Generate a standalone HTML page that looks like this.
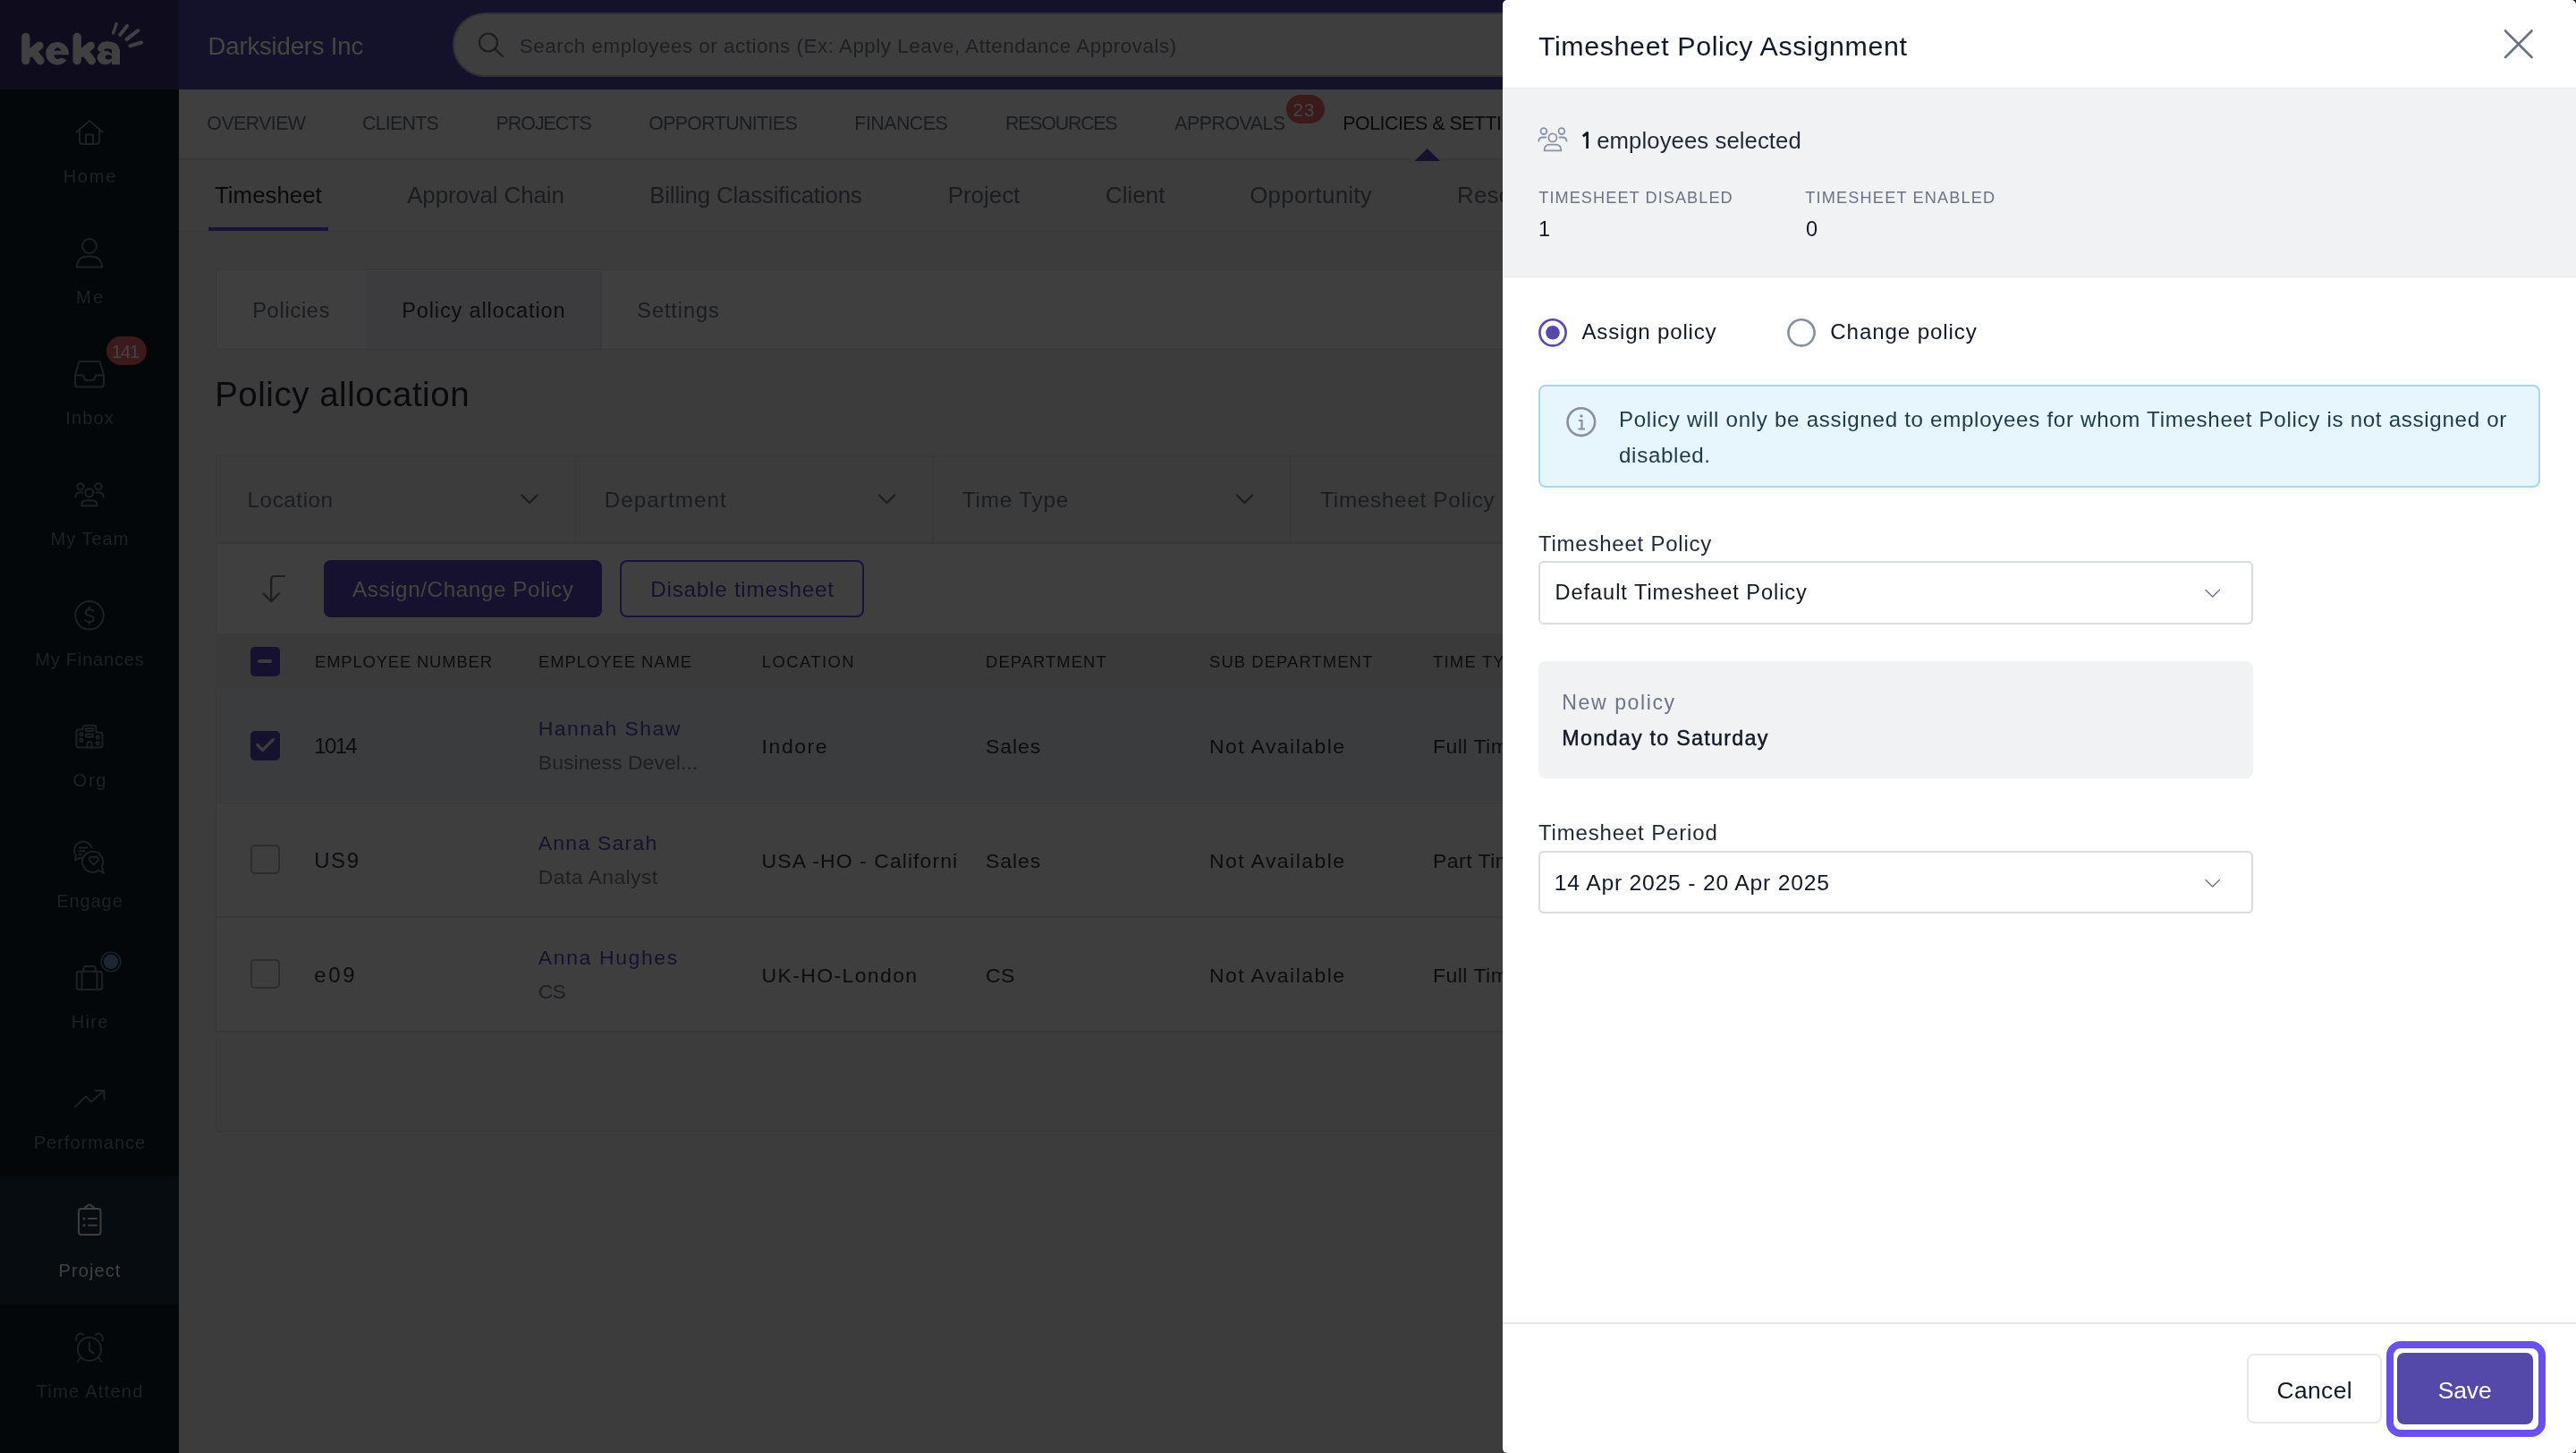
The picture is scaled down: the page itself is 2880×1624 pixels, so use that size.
<!DOCTYPE html>
<html><head><meta charset="utf-8">
<style>
html,body{margin:0;padding:0;width:2880px;height:1624px;overflow:hidden;background:#3c3c3c;font-family:"Liberation Sans",sans-serif;}
.a{position:absolute;box-sizing:border-box;}
.t{position:absolute;white-space:pre;line-height:1;font-family:"Liberation Sans",sans-serif;}
svg{position:absolute;left:0;top:0;overflow:visible;}
@media (max-width:2000px){html{zoom:0.5;}}
</style></head><body>
<!-- ============ PAGE (dimmed) ============ -->
<div class="a" style="left:0;top:0;width:200px;height:1624px;background:#03070a"></div>
<div class="a" style="left:0;top:0;width:200px;height:100px;background:#0e0c1d"></div>
<div class="a" style="left:0;top:1315px;width:200px;height:142px;background:#070c10"></div>
<div class="a" style="left:200px;top:0;width:2680px;height:100px;background:#14112a"></div>
<div class="a" style="left:200px;top:100px;width:1480px;height:78px;background:#3f3f3f"></div>
<div class="a" style="left:200px;top:180px;width:1480px;height:78px;background:#3d3d3d"></div>
<!-- search -->
<div class="a" style="left:506px;top:14px;width:1400px;height:71.5px;border-radius:36px;background:#3e3e3e;border:2px solid #303032"></div>
<!-- badge 23 -->
<div class="a" style="left:1436px;top:104px;width:47px;height:36px;border-radius:18px;background:#404040"></div>
<div class="a" style="left:1438px;top:106px;width:43px;height:32px;border-radius:16px;background:#3a1a1a"></div>
<!-- nav bottom shadow -->
<div class="a" style="left:200px;top:177px;width:1480px;height:5px;background:linear-gradient(#3a3a3a,#3b3b3b 50%,#3d3d3d)"></div>
<!-- subtab underline / border -->
<div class="a" style="left:200px;top:257.5px;width:1480px;height:1.5px;background:#383838"></div>
<div class="a" style="left:233px;top:254px;width:134px;height:4px;background:#17133a;border-radius:1px"></div>
<!-- tab card -->
<div class="a" style="left:241px;top:301px;width:1600px;height:90px;border:1.5px solid #383838;border-radius:5px;background:#3f3f3f"></div>
<div class="a" style="left:242.5px;top:302.5px;width:166.5px;height:87px;background:#3f3f3f;border-radius:4px 0 0 4px"></div>
<div class="a" style="left:409px;top:302.5px;width:262px;height:87px;background:#3c3c3e"></div>
<div class="a" style="left:671px;top:302.5px;width:1.5px;height:87px;background:#393939"></div>
<!-- filter + table card -->
<div class="a" style="left:241px;top:508.5px;width:1600px;height:756px;border:1.5px solid #383838;border-radius:5px;background:#3c3c3c"></div>
<div class="a" style="left:242.5px;top:606px;width:1500px;height:1.5px;background:#383838"></div>
<div class="a" style="left:642.5px;top:510px;width:1.5px;height:96px;background:#383838"></div>
<div class="a" style="left:1042px;top:510px;width:1.5px;height:96px;background:#383838"></div>
<div class="a" style="left:1441.5px;top:510px;width:1.5px;height:96px;background:#383838"></div>
<!-- action bar -->
<div class="a" style="left:242.5px;top:607.5px;width:1500px;height:100.5px;background:#3f3f3f"></div>
<div class="a" style="left:362px;top:626px;width:311px;height:63.5px;border-radius:8px;background:#16112e"></div>
<div class="a" style="left:693px;top:626px;width:273px;height:63.5px;border-radius:8px;border:2.5px solid #17133a"></div>
<!-- table header -->
<div class="a" style="left:242.5px;top:708px;width:1500px;height:61px;background:#3a3a3a"></div>
<div class="a" style="left:279.5px;top:722.5px;width:33px;height:33px;border-radius:5px;background:#16112e"></div>
<div class="a" style="left:288px;top:737px;width:16px;height:4px;border-radius:2px;background:#3c3c3c"></div>
<!-- rows -->
<div class="a" style="left:242.5px;top:769px;width:1500px;height:128.5px;background:#3b3c3e"></div>
<div class="a" style="left:242.5px;top:897.5px;width:1500px;height:127px;background:#3e3e3e"></div>
<div class="a" style="left:242.5px;top:1024px;width:1500px;height:1.5px;background:#383838"></div>
<div class="a" style="left:242.5px;top:896.5px;width:1500px;height:1.5px;background:#393939"></div>
<div class="a" style="left:242.5px;top:1025.5px;width:1500px;height:127px;background:#3e3e3e"></div>
<div class="a" style="left:242.5px;top:1152px;width:1500px;height:1.5px;background:#383838"></div>
<div class="a" style="left:279.5px;top:816.5px;width:33px;height:33px;border-radius:5px;background:#16112e"></div>
<div class="a" style="left:279.5px;top:944px;width:33px;height:33px;border-radius:5px;border:2.5px solid #2b2d30"></div>
<div class="a" style="left:279.5px;top:1072px;width:33px;height:33px;border-radius:5px;border:2.5px solid #2b2d30"></div>
<!-- inbox badge -->
<div class="a" style="left:118.5px;top:376px;width:45.5px;height:32px;border-radius:16px;background:#3a1a1a"></div>
<svg width="2880" height="1624" viewBox="0 0 2880 1624" fill="none">
  <!-- logo -->
  <g stroke="#404040" stroke-linecap="round" fill="none">
    <line x1="28.8" y1="41.5" x2="28.8" y2="67.6" stroke-width="9.4"/>
    <line x1="34" y1="59.5" x2="44" y2="51" stroke-width="9.2"/>
    <line x1="39.5" y1="60.5" x2="45" y2="67.8" stroke-width="9.2"/>
    <line x1="86.2" y1="41.5" x2="86.2" y2="67.6" stroke-width="9.4"/>
    <line x1="91.4" y1="59.5" x2="101.4" y2="51" stroke-width="9.2"/>
    <line x1="96.9" y1="60.5" x2="102.4" y2="67.8" stroke-width="9.2"/>
    <line x1="126.6" y1="37" x2="130.2" y2="26.5" stroke-width="3.4"/>
    <line x1="134.2" y1="39" x2="142.2" y2="28.8" stroke-width="4"/>
    <line x1="141.5" y1="44" x2="154.2" y2="34.2" stroke-width="4.2"/>
    <line x1="145.5" y1="51.2" x2="158.2" y2="47.6" stroke-width="4.2"/>
  </g>
  <path fill-rule="evenodd" fill="#404040" d="M51.199999999999996 59.75 A12.85 12.85 0 1 0 76.89999999999999 59.75 A12.85 12.85 0 1 0 51.199999999999996 59.75 Z M60.150000000000006 59.6 A4.3 6.4 0 1 0 68.75 59.6 A4.3 6.4 0 1 0 60.150000000000006 59.6 Z"/>
  <rect x="58" y="56.7" width="12" height="4.6" fill="#404040"/>
  <path d="M66.5 61.3 L80 61.3 L80 66.8 L73.5 66.8 Q70 64.5 66.5 64.5 Z" fill="#0e0c1d"/>
  <path d="M113.2 54 C115 49.5 118 50.4 121.5 50.4 C126 50.4 129.5 52 129.5 57" stroke="#404040" stroke-width="8" fill="none" stroke-linecap="round"/>
  <rect x="125" y="55" width="9" height="17.2" fill="#404040"/>
  <path fill-rule="evenodd" fill="#404040" d="M108.69999999999999 64.45 A8.9 7.75 0 1 0 126.5 64.45 A8.9 7.75 0 1 0 108.69999999999999 64.45 Z M117.6 63.85 A3.7 2.6 0 1 0 125.0 63.85 A3.7 2.6 0 1 0 117.6 63.85 Z"/>
  <!-- search icon -->
  <circle cx="546" cy="47.5" r="10" stroke="#1c1d21" stroke-width="2.2"/>
  <line x1="553.5" y1="55" x2="562" y2="63" stroke="#1c1d21" stroke-width="2.2" stroke-linecap="round"/>
  <!-- nav triangle -->
  <path d="M1581.5 180 L1595.8 166 L1610 180 Z" fill="#16112e"/>
  <!-- filter chevrons -->
  <g stroke="#1c1d21" stroke-width="2.2" fill="none" stroke-linecap="round" stroke-linejoin="round">
    <path d="M583.5 553.5 L592 562 L600.5 553.5"/>
    <path d="M983 553.5 L991.5 562 L1000 553.5"/>
    <path d="M1383 553.5 L1391.5 562 L1400 553.5"/>
  </g>
  <!-- sort icon -->
  <g stroke="#1c1d21" stroke-width="2.2" fill="none" stroke-linecap="round" stroke-linejoin="round">
    <path d="M317.8 644 H307 Q303.2 644 303.2 648 V672"/>
    <path d="M294.6 663.4 L303.2 672.2 L311.8 663.4"/>
  </g>
  <!-- row1 check -->
  <path d="M288 832.8 L293.6 838.4 L305.2 826.8" stroke="#3c3c3c" stroke-width="3.5" fill="none" stroke-linecap="round" stroke-linejoin="round"/>
  <!-- sidebar icons -->
  <g stroke="#1f2024" stroke-width="2" fill="none" stroke-linecap="round" stroke-linejoin="round">
    <!-- home -->
    <path d="M85.5 147.5 L100 135 L114.5 147.5"/>
    <path d="M89 144 V157.5 Q89 161 92.5 161 H107.5 Q111 161 111 157.5 V144"/>
    <path d="M96 161 V150.5 H104 V161"/>
    <!-- me -->
    <circle cx="100" cy="275" r="8"/>
    <path d="M86 298.5 Q86 286.5 100 286.5 Q114 286.5 114 298.5 Z"/>
    <!-- inbox -->
    <path d="M88.5 404 H111.5 L116 419 V430 Q116 432.5 113.5 432.5 H86.5 Q84 432.5 84 430 V419 Z"/>
    <path d="M84 419.5 H93 Q94 425 97 425 H103 Q106 425 107 419.5 H116"/>
    <!-- my team -->
    <circle cx="99.8" cy="550.8" r="4.6"/>
    <path d="M91.2 565.3 Q91.2 559.2 97.5 559.2 H102.3 Q108.8 559.2 108.8 565.3 Z"/>
    <circle cx="89.9" cy="543.8" r="3.6"/>
    <circle cx="110" cy="543.8" r="3.6"/>
    <path d="M84.3 555.5 Q84.5 550.6 89 550.6 H92.3"/>
    <path d="M115.7 555.5 Q115.5 550.6 111 550.6 H107.7"/>
    <!-- finances -->
    <circle cx="100" cy="687.8" r="15.8"/>
    <path d="M104.6 683 Q103.2 681.2 100 681.2 Q95.8 681.2 95.8 684.5 Q95.8 687.2 100 688 Q104.8 688.8 104.8 691.7 Q104.8 695 100 695 Q96.6 695 95.1 693"/>
    <line x1="100" y1="678.6" x2="100" y2="681.2"/>
    <line x1="100" y1="695" x2="100" y2="697.6"/>
    <!-- org -->
    <path d="M85.5 832.5 V818 Q85.5 815.3 88.3 815.3 H92.7 V813.5 Q92.7 810.8 95.5 810.8 H104.6 Q107.4 810.8 107.4 813.5 V818.6 H111.7 Q114.5 818.6 114.5 821.4 V832.7 Q114.5 835.5 111.7 835.5 H88.3 Q85.5 835.5 85.5 832.7 Z"/>
    <path d="M97.4 835.5 V831.7 Q97.4 829 100 829 Q102.6 829 102.6 831.7 V835.5"/>
    <rect x="95.8" y="813.9" width="8.4" height="3.2" rx="1"/>
    <rect x="95.8" y="820.6" width="8.4" height="3.2" rx="1"/>
    <rect x="89.3" y="819.2" width="3" height="3" rx="1"/>
    <rect x="89.3" y="826" width="3" height="3" rx="1"/>
    <rect x="107.7" y="822.5" width="3" height="3" rx="1"/>
    <rect x="107.7" y="829.3" width="3" height="3" rx="1"/>
    <!-- engage -->
    <path d="M102.5 947.5 A10 10 0 0 0 83 950.5 Q83 953.5 85 956 L84 961.5 L89.5 958.8 Q90.5 959 91.5 959"/>
    <line x1="88.8" y1="947.6" x2="97.6" y2="947.6"/>
    <line x1="88.4" y1="951.3" x2="94.6" y2="951.3"/>
    <line x1="88.4" y1="954.9" x2="90.8" y2="954.9"/>
    <path d="M113.8 968.8 A11.6 11.6 0 1 0 110.5 972.6 L116 975.8 Z"/>
    <path d="M104.9 966.6 L101 962.8 Q99.3 960.8 100.3 958.8 Q101.8 956.8 104 957.8 L104.9 958.6 L105.8 957.8 Q108 956.8 109.5 958.8 Q110.5 960.8 108.8 962.8 Z"/>
    <!-- hire -->
    <rect x="85.8" y="1085.8" width="28.4" height="20.2" rx="3"/>
    <path d="M93.5 1085.8 V1082.5 Q93.5 1080 96 1080 H104.3 Q106.8 1080 106.8 1082.5 V1085.8"/>
    <line x1="91.6" y1="1085.8" x2="91.6" y2="1106"/>
    <line x1="108.4" y1="1085.8" x2="108.4" y2="1106"/>
    <!-- performance -->
    <path d="M84 1237 L96 1225.5 L102 1231.5 L116 1219"/>
    <path d="M106.5 1219 H116.5 V1228.5"/>
  </g>
  <g stroke="#3d3d3e" stroke-width="2" fill="none" stroke-linecap="round" stroke-linejoin="round">
    <!-- project -->
    <rect x="88" y="1351" width="24.5" height="29" rx="3"/>
    <path d="M95 1351.5 V1350 Q95 1348.5 96.5 1348.5 H97.5 Q98 1346.5 100 1346.5 Q102 1346.5 102.5 1348.5 H103.5 Q105 1348.5 105 1350 V1351.5"/>
    <line x1="99" y1="1362" x2="108" y2="1362"/>
    <line x1="99" y1="1369.5" x2="108" y2="1369.5"/>
    <circle cx="94" cy="1362" r="0.6"/>
    <circle cx="94" cy="1369.5" r="0.6"/>
  </g>
  <g stroke="#1f2024" stroke-width="2" fill="none" stroke-linecap="round" stroke-linejoin="round">
    <!-- time attend -->
    <circle cx="100" cy="1507.9" r="13.1"/>
    <path d="M100 1500.3 V1509 L104.6 1512.6"/>
    <path d="M85.3 1498 Q84.5 1491.5 89.5 1490.6 Q91.8 1490.4 93 1492"/>
    <path d="M114.7 1498 Q115.5 1491.5 110.5 1490.6 Q108.2 1490.4 107 1492"/>
    <line x1="90" y1="1517.6" x2="86.4" y2="1521.8"/>
    <line x1="110" y1="1517.6" x2="113.6" y2="1521.8"/>
  </g>
  <circle cx="124" cy="1075" r="10.8" fill="none" stroke="#17222f" stroke-width="1.6"/><circle cx="124" cy="1075" r="8.2" fill="#1c2633"/>
</svg>
<div style="position:absolute;left:0;top:0;width:2880px;height:1624px;will-change:transform">
<span class="t" style="top:37.72px;font-size:27.62px;color:#46463f;letter-spacing:-0.215px;left:232.57px;">Darksiders Inc</span>
<span class="t" style="top:40.75px;font-size:22.38px;color:#1e1f23;letter-spacing:0.536px;left:580.73px;">Search employees or actions (Ex: Apply Leave, Attendance Approvals)</span>
<span class="t" style="top:127.71px;font-size:21.37px;color:#1b1c20;letter-spacing:-0.593px;left:231.36px;">OVERVIEW</span>
<span class="t" style="top:127.71px;font-size:21.37px;color:#1b1c20;letter-spacing:-0.739px;left:405.06px;">CLIENTS</span>
<span class="t" style="top:127.71px;font-size:21.37px;color:#1b1c20;letter-spacing:-0.979px;left:554.56px;">PROJECTS</span>
<span class="t" style="top:127.71px;font-size:21.37px;color:#1b1c20;letter-spacing:-0.633px;left:725.16px;">OPPORTUNITIES</span>
<span class="t" style="top:127.71px;font-size:21.37px;color:#1b1c20;letter-spacing:-0.531px;left:955.36px;">FINANCES</span>
<span class="t" style="top:127.71px;font-size:21.37px;color:#1b1c20;letter-spacing:-1.216px;left:1124.06px;">RESOURCES</span>
<span class="t" style="top:127.71px;font-size:21.37px;color:#1b1c20;letter-spacing:-0.504px;left:1313.36px;">APPROVALS</span>
<span class="t" style="top:127.71px;font-size:21.37px;color:#0b0b0d;letter-spacing:-0.510px;left:1501.36px;">POLICIES &amp; SETTINGS</span>
<span class="t" style="top:113.18px;font-size:20.93px;color:#444444;letter-spacing:0.600px;left:1445.57px;">23</span>
<span class="t" style="top:206.19px;font-size:25.87px;color:#0a0a0c;left:240.02px;">Timesheet</span>
<span class="t" style="top:206.19px;font-size:25.87px;color:#1b1c20;letter-spacing:-0.097px;left:455.22px;">Approval Chain</span>
<span class="t" style="top:206.19px;font-size:25.87px;color:#1b1c20;letter-spacing:-0.177px;left:726.22px;">Billing Classifications</span>
<span class="t" style="top:206.19px;font-size:25.87px;color:#1b1c20;letter-spacing:0.011px;left:1059.72px;">Project</span>
<span class="t" style="top:206.19px;font-size:25.87px;color:#1b1c20;letter-spacing:0.085px;left:1235.92px;">Client</span>
<span class="t" style="top:206.19px;font-size:25.87px;color:#1b1c20;letter-spacing:0.286px;left:1397.22px;">Opportunity</span>
<span class="t" style="top:206.19px;font-size:25.87px;color:#1b1c20;letter-spacing:0.300px;left:1628.92px;">Resources</span>
<span class="t" style="top:335.56px;font-size:23.55px;color:#1b1c20;letter-spacing:0.731px;left:282.19px;">Policies</span>
<span class="t" style="top:335.56px;font-size:23.55px;color:#0d0d10;letter-spacing:0.836px;left:449.29px;">Policy allocation</span>
<span class="t" style="top:335.56px;font-size:23.55px;color:#1b1c20;letter-spacing:0.912px;left:712.29px;">Settings</span>
<span class="t" style="top:422.19px;font-size:38.52px;color:#0a0a0d;letter-spacing:0.516px;left:240.14px;">Policy allocation</span>
<span class="t" style="top:546.95px;font-size:24.27px;color:#1b1c20;letter-spacing:0.544px;left:276.57px;">Location</span>
<span class="t" style="top:546.95px;font-size:24.27px;color:#1b1c20;letter-spacing:1.019px;left:675.77px;">Department</span>
<span class="t" style="top:546.95px;font-size:24.27px;color:#1b1c20;letter-spacing:0.815px;left:1075.87px;">Time Type</span>
<span class="t" style="top:546.95px;font-size:24.27px;color:#1b1c20;letter-spacing:0.706px;left:1476.17px;">Timesheet Policy</span>
<span class="t" style="top:646.95px;font-size:24.27px;color:#45453f;letter-spacing:0.574px;left:393.97px;">Assign/Change Policy</span>
<span class="t" style="top:646.95px;font-size:24.27px;color:#17112f;letter-spacing:0.743px;left:727.27px;">Disable timesheet</span>
<span class="t" style="top:731.37px;font-size:18.46px;color:#0d0d10;letter-spacing:0.817px;left:352.05px;">EMPLOYEE NUMBER</span>
<span class="t" style="top:731.37px;font-size:18.46px;color:#0d0d10;letter-spacing:0.939px;left:601.95px;">EMPLOYEE NAME</span>
<span class="t" style="top:731.37px;font-size:18.46px;color:#0d0d10;letter-spacing:1.417px;left:851.75px;">LOCATION</span>
<span class="t" style="top:731.37px;font-size:18.46px;color:#0d0d10;letter-spacing:1.031px;left:1102.05px;">DEPARTMENT</span>
<span class="t" style="top:731.37px;font-size:18.46px;color:#0d0d10;letter-spacing:1.058px;left:1352.05px;">SUB DEPARTMENT</span>
<span class="t" style="top:731.37px;font-size:18.46px;color:#0d0d10;letter-spacing:1.200px;left:1602.05px;">TIME TYPE</span>
<span class="t" style="top:822.19px;font-size:23.98px;color:#0d0d10;letter-spacing:-1.630px;left:351.28px;">1014</span>
<span class="t" style="top:803.06px;font-size:22.97px;color:#17112f;letter-spacing:1.417px;left:601.81px;">Hannah Shaw</span>
<span class="t" style="top:841.16px;font-size:22.97px;color:#1e1f23;letter-spacing:0.066px;left:601.81px;">Business Devel...</span>
<span class="t" style="top:822.56px;font-size:22.97px;color:#0d0d10;letter-spacing:1.577px;left:851.61px;">Indore</span>
<span class="t" style="top:822.56px;font-size:22.97px;color:#0d0d10;letter-spacing:0.989px;left:1101.91px;">Sales</span>
<span class="t" style="top:822.56px;font-size:22.97px;color:#0d0d10;letter-spacing:1.451px;left:1351.91px;">Not Available</span>
<span class="t" style="top:822.56px;font-size:22.97px;color:#0d0d10;letter-spacing:0.500px;left:1601.91px;">Full Time</span>
<span class="t" style="top:950.19px;font-size:23.98px;color:#0d0d10;letter-spacing:1.549px;left:351.28px;">US9</span>
<span class="t" style="top:931.06px;font-size:22.97px;color:#17112f;letter-spacing:1.238px;left:601.81px;">Anna Sarah</span>
<span class="t" style="top:969.16px;font-size:22.97px;color:#1e1f23;letter-spacing:0.409px;left:601.81px;">Data Analyst</span>
<span class="t" style="top:950.56px;font-size:22.97px;color:#0d0d10;letter-spacing:1.078px;left:851.61px;">USA -HO - Californi</span>
<span class="t" style="top:950.56px;font-size:22.97px;color:#0d0d10;letter-spacing:0.989px;left:1101.91px;">Sales</span>
<span class="t" style="top:950.56px;font-size:22.97px;color:#0d0d10;letter-spacing:1.451px;left:1351.91px;">Not Available</span>
<span class="t" style="top:950.56px;font-size:22.97px;color:#0d0d10;letter-spacing:0.500px;left:1601.91px;">Part Time</span>
<span class="t" style="top:1078.19px;font-size:23.98px;color:#0d0d10;letter-spacing:2.719px;left:351.28px;">e09</span>
<span class="t" style="top:1059.06px;font-size:22.97px;color:#17112f;letter-spacing:1.627px;left:601.81px;">Anna Hughes</span>
<span class="t" style="top:1097.16px;font-size:22.97px;color:#1e1f23;letter-spacing:-0.813px;left:601.81px;">CS</span>
<span class="t" style="top:1078.56px;font-size:22.97px;color:#0d0d10;letter-spacing:1.380px;left:851.61px;">UK-HO-London</span>
<span class="t" style="top:1078.56px;font-size:22.97px;color:#0d0d10;letter-spacing:0.487px;left:1101.91px;">CS</span>
<span class="t" style="top:1078.56px;font-size:22.97px;color:#0d0d10;letter-spacing:1.451px;left:1351.91px;">Not Available</span>
<span class="t" style="top:1078.56px;font-size:22.97px;color:#0d0d10;letter-spacing:0.500px;left:1601.91px;">Full Time</span>
<span class="t" style="top:186.82px;font-size:20.06px;color:#202125;letter-spacing:1.706px;left:70.70px;">Home</span>
<span class="t" style="top:321.82px;font-size:20.06px;color:#202125;letter-spacing:2.244px;left:84.95px;">Me</span>
<span class="t" style="top:457.32px;font-size:20.06px;color:#202125;letter-spacing:1.139px;left:73.20px;">Inbox</span>
<span class="t" style="top:592.32px;font-size:20.06px;color:#202125;letter-spacing:0.992px;left:56.55px;">My Team</span>
<span class="t" style="top:726.72px;font-size:20.06px;color:#202125;letter-spacing:0.796px;left:39.20px;">My Finances</span>
<span class="t" style="top:862.32px;font-size:20.06px;color:#202125;letter-spacing:1.791px;left:81.50px;">Org</span>
<span class="t" style="top:996.52px;font-size:20.06px;color:#202125;letter-spacing:0.896px;left:63.20px;">Engage</span>
<span class="t" style="top:1131.52px;font-size:20.06px;color:#202125;letter-spacing:1.279px;left:79.70px;">Hire</span>
<span class="t" style="top:1266.52px;font-size:20.06px;color:#202125;letter-spacing:0.974px;left:37.75px;">Performance</span>
<span class="t" style="top:1410.22px;font-size:20.06px;color:#424242;letter-spacing:1.083px;left:65.55px;">Project</span>
<span class="t" style="top:1545.22px;font-size:20.06px;color:#202125;letter-spacing:1.257px;left:40.60px;">Time Attend</span>
<span class="t" style="top:383.32px;font-size:20.64px;color:#444444;letter-spacing:-1.442px;left:124.68px;">141</span>
</div>
<!-- ============ DRAWER ============ -->
<div class="a" style="left:1680px;top:0;width:1200px;height:1624px;background:#fff;border-radius:5px"></div>
<div class="a" style="left:1680px;top:97.5px;width:1200px;height:212.5px;background:#f1f2f4;border-top:1.5px solid #e6e8eb;border-bottom:1.5px solid #e6e8eb"></div>
<div class="a" style="left:1720px;top:430px;width:1119.5px;height:115px;background:#e6f6fc;border:2px solid #a9d8ea;border-radius:8px"></div>
<div class="a" style="left:1720px;top:626.5px;width:799px;height:71.5px;border:2px solid #d9dce1;border-radius:6px"></div>
<div class="a" style="left:1720px;top:738.5px;width:799px;height:131px;background:#f1f2f4;border-radius:8px"></div>
<div class="a" style="left:1720px;top:951px;width:799px;height:70px;border:2px solid #d9dce1;border-radius:6px"></div>
<div class="a" style="left:1680px;top:1478px;width:1200px;height:2px;background:#e6e8eb"></div>
<div class="a" style="left:2511.5px;top:1512.5px;width:151.5px;height:78.5px;border:2px solid #e6e8eb;border-radius:8px"></div>
<div class="a" style="left:2668px;top:1499px;width:177.5px;height:106.5px;border:8.5px solid #6a4ff0;border-radius:16px"></div>
<div class="a" style="left:2680px;top:1512px;width:152px;height:80px;background:#5448a8;border-radius:8px"></div>
<svg width="2880" height="1624" viewBox="0 0 2880 1624" fill="none">
  <g stroke="#6b7280" stroke-width="2.6" stroke-linecap="round">
    <line x1="2801" y1="34.5" x2="2830.5" y2="64"/>
    <line x1="2830.5" y1="34.5" x2="2801" y2="64"/>
  </g>
  <g stroke="#8a94a6" stroke-width="1.8" fill="none" stroke-linecap="round">
    <circle cx="1735.9" cy="153.9" r="4.5"/>
    <path d="M1726.6 168.3 Q1726.6 161.6 1732.5 161.6 H1739.5 Q1745.3 161.6 1745.3 168.3 Z"/>
    <circle cx="1725.9" cy="146.6" r="3.4"/>
    <circle cx="1745.9" cy="146.6" r="3.4"/>
    <path d="M1720.3 157.6 Q1720.6 153.5 1725 153.5 H1728.3"/>
    <path d="M1751.5 157.6 Q1751.2 153.5 1746.8 153.5 H1743.5"/>
  </g>
  <path d="M1769.8 152.4 L1774.6 148.4 V166" stroke="#111827" stroke-width="2.8" fill="none" stroke-linejoin="round"/>
  <circle cx="1736" cy="371.8" r="14.6" stroke="#5b47ad" stroke-width="2.6"/>
  <circle cx="1736" cy="371.8" r="7.8" fill="#5448a8"/>
  <circle cx="2014" cy="371.8" r="14.6" stroke="#8690a2" stroke-width="2.6"/>
  <circle cx="1767.8" cy="471.6" r="15.3" stroke="#8a8f9a" stroke-width="2.6"/>
  <circle cx="1768" cy="465" r="1.7" fill="#8a8f9a"/>
  <path d="M1765 470 H1768.5 V479.5 M1764.5 479.5 H1772" stroke="#8a8f9a" stroke-width="2.2"/>
  <g stroke="#717785" stroke-width="1.5" fill="none" stroke-linecap="round" stroke-linejoin="round">
    <path d="M2466 659.5 L2473.7 667 L2481.4 659.5"/>
    <path d="M2466 983.5 L2473.7 991 L2481.4 983.5"/>
  </g>
</svg>
<div style="position:absolute;left:0;top:0;width:2880px;height:1624px;will-change:transform">
<span class="t" style="top:36.48px;font-size:30.38px;color:#111827;letter-spacing:0.631px;left:1719.89px;">Timesheet Policy Assignment</span>
<span class="t" style="top:145.22px;font-size:25.73px;color:#1f2937;letter-spacing:0.072px;left:1785.23px;">employees selected</span>
<span class="t" style="top:212.22px;font-size:18.17px;color:#6b7385;letter-spacing:1.062px;left:1720.25px;">TIMESHEET DISABLED</span>
<span class="t" style="top:212.22px;font-size:18.17px;color:#6b7385;letter-spacing:1.156px;left:2018.35px;">TIMESHEET ENABLED</span>
<span class="t" style="top:245.36px;font-size:23.55px;color:#111827;left:1720.09px;">1</span>
<span class="t" style="top:245.36px;font-size:23.55px;color:#111827;left:2018.89px;">0</span>
<span class="t" style="top:359.47px;font-size:24.13px;color:#111827;letter-spacing:0.779px;left:1768.48px;">Assign policy</span>
<span class="t" style="top:359.47px;font-size:24.13px;color:#111827;letter-spacing:0.888px;left:2046.28px;">Change policy</span>
<span class="t" style="top:457.27px;font-size:24.13px;color:#1e3a4a;letter-spacing:0.695px;left:1809.98px;">Policy will only be assigned to employees for whom Timesheet Policy is not assigned or</span>
<span class="t" style="top:496.87px;font-size:24.13px;color:#1e3a4a;letter-spacing:0.692px;left:1809.98px;">disabled.</span>
<span class="t" style="top:595.69px;font-size:23.98px;color:#1f2937;letter-spacing:0.789px;left:1719.88px;">Timesheet Policy</span>
<span class="t" style="top:651.46px;font-size:23.55px;color:#111827;letter-spacing:0.967px;left:1738.49px;">Default Timesheet Policy</span>
<span class="t" style="top:773.63px;font-size:23.11px;color:#6b7588;letter-spacing:1.561px;left:1746.31px;">New policy</span>
<span class="t" style="top:813.69px;font-size:23.40px;color:#111827;letter-spacing:1.221px;-webkit-text-stroke:0.45px #111827;left:1746.30px;">Monday to Saturday</span>
<span class="t" style="top:918.79px;font-size:23.98px;color:#1f2937;letter-spacing:0.859px;left:1719.88px;">Timesheet Period</span>
<span class="t" style="top:975.28px;font-size:24.71px;color:#111827;letter-spacing:0.776px;left:1737.86px;">14 Apr 2025 - 20 Apr 2025</span>
<span class="t" style="top:1540.50px;font-size:26.45px;color:#111827;letter-spacing:0.358px;left:2545.51px;">Cancel</span>
<span class="t" style="top:1540.50px;font-size:26.45px;color:#ffffff;letter-spacing:-0.126px;left:2725.71px;">Save</span>
</div>
</body></html>
